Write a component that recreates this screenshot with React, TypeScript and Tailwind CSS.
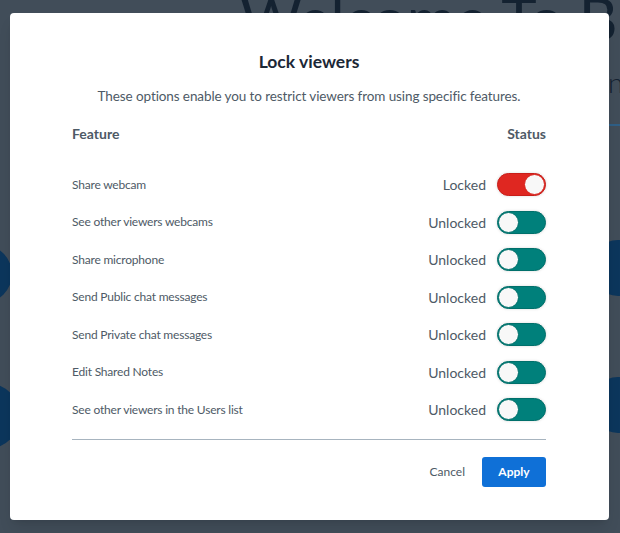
const features = [
  { label: "Share webcam", locked: true },
  { label: "See other viewers webcams", locked: false },
  { label: "Share microphone", locked: false },
  { label: "Send Public chat messages", locked: false },
  { label: "Send Private chat messages", locked: false },
  { label: "Edit Shared Notes", locked: false },
  { label: "See other viewers in the Users list", locked: false },
];

const Toggle = ({ on }: { on: boolean }) => {
  return (
    <div
      className={`flex h-[23px] w-[49px] items-center rounded-full border shadow-[0_0_3px_rgba(0,0,0,0.15)] ${
        on
          ? "justify-end border-[#c81e19] bg-[#df2721]"
          : "justify-start border-[#00706b] bg-[#00807b]"
      }`}
    >
      <div
        className={`h-[21px] w-[21px] rounded-full border bg-[#f8f8f8] ${
          on ? "border-[#d8231d]" : "border-[#00706b]"
        }`}
      />
    </div>
  );
};

export default function App() {
  return (
    <div
      className="relative h-[533px] w-full overflow-hidden bg-[#414d59]"
      style={{ fontFamily: "Lato, 'Noto Sans', sans-serif" }}
    >
      {/* page behind the overlay */}
      <div className="absolute left-[240px] top-[-12px] whitespace-nowrap text-[60px] leading-none text-[#142231]">
        Welcome To BigBlueButton
      </div>
      <div className="absolute left-[608px] top-[68px] whitespace-nowrap text-[28px] font-light leading-none text-[#142231]">
        n
      </div>
      <div className="absolute left-[600px] top-[124px] h-[2px] w-[30px] bg-[#2f5f86]" />
      <div className="absolute left-[-46px] top-[245px] h-[58px] w-[58px] rounded-full bg-[#0c365c]" />
      <div className="absolute left-[-46px] top-[383px] h-[66px] w-[66px] rounded-full bg-[#0c365c]" />
      <div className="absolute left-[590px] top-[240px] h-[56px] w-[56px] rounded-full bg-[#0c365c]" />
      <div className="absolute left-[590px] top-[377px] h-[56px] w-[56px] rounded-full bg-[#0c365c]" />

      {/* modal */}
      <div className="absolute inset-0 px-[10px] pt-[13px]">
        <div className="flex h-[507px] w-[599px] flex-col rounded-[4px] bg-white pl-[62px] pr-[63px] pt-[38px] shadow-lg">
          <h2 className="text-center text-[17.5px] font-bold leading-[22px] text-[#1c2836]">
            Lock viewers
          </h2>
          <p className="mt-[12px] text-center text-[13.5px] leading-[22px] tracking-[-0.1px] text-[#4e5a66]">
            These options enable you to restrict viewers from using specific features.
          </p>

          <div className="mt-[16px] flex h-[20px] items-center justify-between text-[14px] font-bold text-[#4e5a66]">
            <span>Feature</span>
            <span>Status</span>
          </div>

          <div className="mt-[23px] flex flex-col">
            {features.map((f) => (
              <div key={f.label} className="flex h-[37.5px] items-center justify-between">
                <span className="text-[12px] tracking-[-0.2px] text-[#4e5a66]">{f.label}</span>
                <div className="flex items-center gap-[11px]">
                  <span className="text-[14px] text-[#4e5a66]">
                    {f.locked ? "Locked" : "Unlocked"}
                  </span>
                  <Toggle on={f.locked} />
                </div>
              </div>
            ))}
          </div>

          <div className="mt-[10px] h-px w-full bg-[#a7b4bf]" />

          <div className="mt-[17px] flex items-center justify-end gap-[17px]">
            <button className="text-[12px] text-[#4e5a66]">Cancel</button>
            <button className="h-[30px] w-[64px] rounded-[3px] bg-[#0f70d7] text-[12px] font-bold text-white">
              Apply
            </button>
          </div>
        </div>
      </div>
    </div>
  );
}
